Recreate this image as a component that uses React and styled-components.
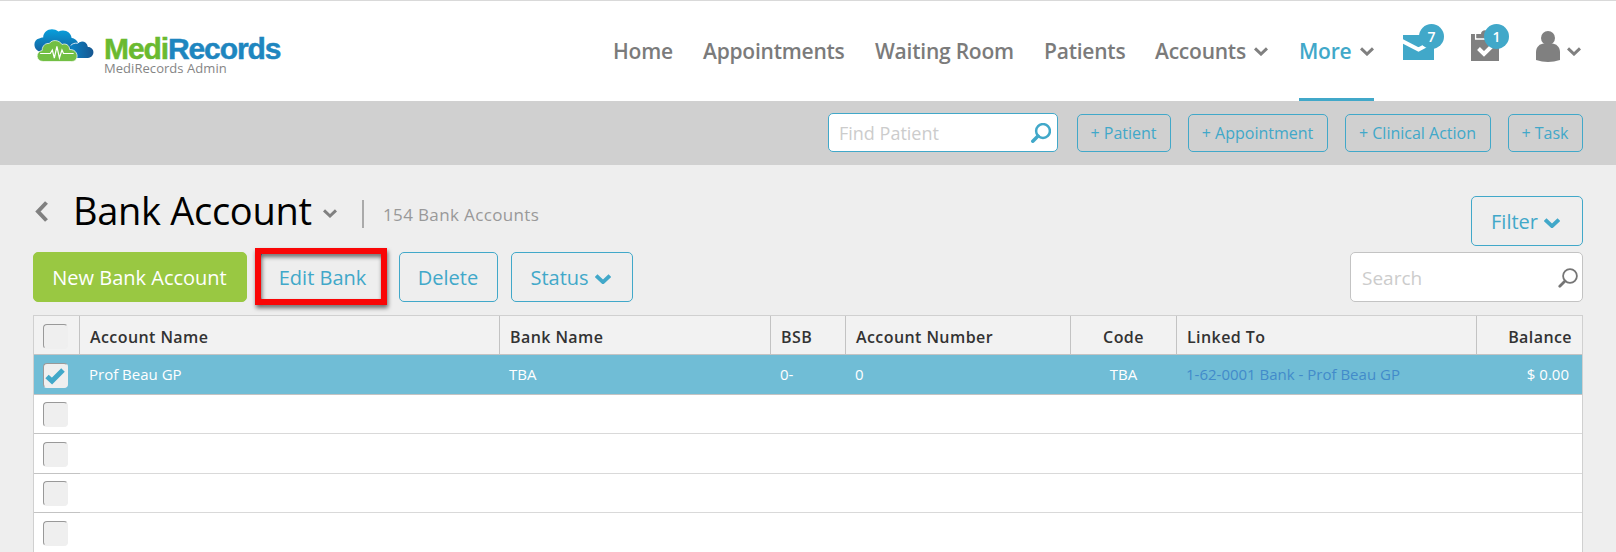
import React from "react";
import styled, { createGlobalStyle, ThemeProvider } from 'styled-components';

const theme = {
  primary: '#41a8c9',
  green: '#99c842',
  gray: '#7b7b7b',
  icon: '#808080',
  border: '#c3c3c3',
}

const GlobalStyle = createGlobalStyle`
  * {
    box-sizing: border-box;
  }
  body {
    margin: 0;
    background-color: #eee;
    font-family: "Open Sans", sans-serif;
  }
`
const Page = styled.div`
  width: 1616px;
  height: 552px;
  overflow: hidden;
  white-space: nowrap;
`
const Header = styled.header`
  height: 101px;
  background-color: #fff;
  border-top: 1px solid #d9d9d9;
  display: flex;
  padding-left: 33px;
`
const Logo = styled.div`
  display: flex;
  width: 580px;
  padding-top: 26px;
`
const LogoText = styled.div`
  margin-left: 9px;
  padding-top: 8px;
`
const Brand = styled.div`
  font-family: "Liberation Sans", sans-serif;
  font-weight: bold;
  font-size: 30px;
  line-height: 28px;
  letter-spacing: -1.1px;
  color: #1e86bf;
  -webkit-text-stroke: .5px currentColor;
  span{
    color: #6aba30;
  }
`
const BrandUser = styled.div`
  font-size: 13px;
  line-height: 14px;
  margin-top: -2px;
  color: #858585;
  letter-spacing: .05px;
`
const Nav = styled.nav`
  display: flex;
`
const NavItem = styled.a`
  display: flex;
  align-items: center;
  width: ${props => props.$width}px;
  margin-right: ${props => props.$gap || 0}px;
  height: 100px;
  padding-top: 2px;
  padding-bottom: ${props => props.$active ? 0 : 3}px;
  border-bottom: ${props => props.$active ? `3px solid ${props.theme.primary}` : 'none'};
  color: ${props => props.$active ? props.theme.primary : props.theme.gray};
  font-size: 21px;
  font-weight: 600;
  letter-spacing: -.23px;
  svg{
    margin-left: auto;
    margin-top: 2px;
  }
`
const NavIcon = styled.div`
  position: relative;
  width: ${props => props.$width}px;
  padding-top: ${props => props.$top}px;
  svg{
    display: block;
  }
`
const Badge = styled.span`
  position: absolute;
  top: 23px;
  left: ${props => props.$left}px;
  width: 25px;
  height: 25px;
  border-radius: 50%;
  background-color: ${props => props.theme.primary};
  color: #fff;
  font-size: 14px;
  font-weight: 600;
  line-height: 26px;
  text-align: center;
`
const Toolbar = styled.div`
  height: 64px;
  background-color: #d0d0d0;
  display: flex;
  justify-content: flex-end;
  align-items: flex-end;
  gap: 17px;
  padding: 0 33px 13px 0;
`
const SearchBox = styled.div`
  width: ${props => props.$width}px;
  height: ${props => props.$height}px;
  margin-right: ${props => props.$gap || 0}px;
  padding: 1px ${props => props.$right}px 0 ${props => props.$active ? 10 : 11}px;
  border: 1px solid ${props => props.$active ? props.theme.primary : props.theme.border};
  border-radius: 5px;
  background-color: #fff;
  color: #ccc;
  font-size: ${props => props.$active ? 18 : 19}px;
  display: flex;
  align-items: center;
  justify-content: space-between;
`
const Button = styled.button`
  position: relative;
  width: ${props => props.$width}px;
  height: ${props => props.$small ? 38 : 50}px;
  padding: 0 1px 0 0;
  border: 1px solid ${props => props.$green ? props.theme.green : props.theme.primary};
  border-radius: 5px;
  background-color: ${props => props.$green ? props.theme.green : 'transparent'};
  color: ${props => props.$green ? '#fff' : props.theme.primary};
  font-family: inherit;
  font-size: ${props => props.$small ? 16 : 20}px;
  display: flex;
  align-items: center;
  justify-content: center;
  gap: 6px;
  svg{
    margin: 4px 2px 0 0;
  }
`
const Highlight = styled.span`
  position: absolute;
  top: -5px;
  left: -6px;
  width: 132px;
  height: 57px;
  border: 6px solid #f90606;
  filter: drop-shadow(1px 3px 2px rgba(0, 0, 0, .55));
`
const TitleRow = styled.div`
  display: flex;
  justify-content: space-between;
  height: 87px;
  padding: 0 33px 0 35px;
`
const TitleGroup = styled.div`
  display: flex;
  align-items: center;
  height: 92px;
  > svg:last-of-type{
    margin-top: 6px;
  }
`
const Title = styled.h1`
  margin: -2px 11px 0 25px;
  width: 239px;
  font-size: 38px;
  font-weight: 400;
  letter-spacing: -.3px;
  color: #000;
`
const Count = styled.div`
  margin: 5px 0 0 25px;
  padding-left: 19px;
  border-left: 2px solid #aaa;
  height: 28px;
  line-height: 29px;
  font-size: 17px;
  letter-spacing: .36px;
  color: #999;
`
const FilterCont = styled.div`
  padding-top: 31px;
`
const Actions = styled.div`
  display: flex;
  justify-content: space-between;
  padding: 0 33px;
`
const ButtonGroup = styled.div`
  display: flex;
  gap: 13px;
`
const Table = styled.div`
  margin: 13px 33px 0;
  border: 1px solid #d0d0d0;
  border-bottom: none;
`
const Row = styled.div`
  display: grid;
  grid-template-columns: 46px 420px 271px 75px 225px 106px 300px 105px;
  height: ${props => props.$height}px;
  background-color: ${props => props.$selected ? '#70bdd6' : '#fff'};
  color: #fff;
  font-size: 15px;
`
const HeadRow = styled(Row)`
  background-color: #f2f2f2;
  color: #333;
  font-size: 16px;
  font-weight: 600;
  letter-spacing: .42px;
`
const Cell = styled.div`
  display: flex;
  align-items: center;
  justify-content: ${props => props.$align || 'flex-start'};
  padding: 0 13px 2px ${props => props.$align === 'center' ? 12 : 9}px;
  border-bottom: 1px solid ${props => props.$light ? '#d9d9d9' : props.theme.border};
`
const HeadCell = styled(Cell)`
  padding: 3px 10px 0 10px;
  border-right: 1px solid ${props => props.theme.border};
  &:last-child{
    border-right: none;
  }
`
const CheckCell = styled.div`
  padding: ${props => props.$top}px 0 0 9px;
  border-bottom: 1px solid ${props => props.theme.border};
  border-right: ${props => props.$head ? `1px solid ${props.theme.border}` : 'none'};
`
const Checkbox = styled.div`
  width: 25px;
  height: 25px;
  border-radius: 4px;
  border: 1px solid #efefef;
  border-top-color: #999;
  border-left-color: #999;
  background-color: #efefef;
  svg{
    display: block;
  }
`
const LinkText = styled.a`
  color: #428bca;
`

const Chevron = ({ color = theme.icon, width = 14, stroke = 3 }) => (
  <svg width={width} height={width * .65} viewBox="0 0 14 9" fill="none" stroke={color} strokeWidth={stroke}>
    <path d="M1 1.3 L7 7 L13 1.3" />
  </svg>
)

const SearchIcon = ({ color, size, stroke }) => (
  <svg width={size} height={size} viewBox="0 0 20 20" fill="none" stroke={color}>
    <circle cx="12" cy="8" r="6.9" strokeWidth={stroke} />
    <path d="M7 13 L1.8 18.2" strokeWidth={stroke + 1} strokeLinecap="round" />
  </svg>
)

const LogoIcon = () => (
  <svg width="62" height="36" viewBox="-1 0 61 36" preserveAspectRatio="none">
    <defs>
      <linearGradient id="cloudBlue" x1="0" y1="0" x2="0" y2="1">
        <stop offset="0" stopColor="#08a0dc" />
        <stop offset="1" stopColor="#14619f" />
      </linearGradient>
      <linearGradient id="cloudDark" x1="0" y1="0" x2="1" y2="0">
        <stop offset="0" stopColor="#0b82c4" />
        <stop offset="1" stopColor="#175690" />
      </linearGradient>
    </defs>
    <path fill="url(#cloudBlue)" d="M8 25 C-1 25 -2 13 5 11.500 C6 11 8 10.500 9 10.500 C9 3 18 -.5 24 4.500 C30 1.500 36.500 5 37 11 C44 12 46 20 41 25 Z" />
    <path fill="url(#cloudDark)" d="M36 31 V19 C38 17 40 16 43 16.500 C46 13 52 14 53 20 C60 20 60.500 30 53 31 Z" />
    <path fill="none" stroke="#fff" strokeWidth=".8" d="M36 18.500 C38 16.500 40 16 43 16.200 C44 15 45 14.300 46.500 14" />
    <path fill="#72bf44" stroke="#fff" strokeWidth=".7" d="M9 34.500 C1.500 34.500 1 24.500 8 23.500 C8 18 12 16 15 16.500 C18 12 25 13 27.500 17.500 C31 16 35 18 35 22.500 C44 22 45 34.500 37 34.500 Z" />
    <path fill="none" stroke="#fff" strokeWidth="1.200" d="M6 26.500 H16 L18 23 L20 31 L22.500 19.500 L25 31 L27.500 23 L29 26.500 H39" />
  </svg>
)

const columns = [
  { name: 'Account Name', value: 'Prof Beau GP' },
  { name: 'Bank Name', value: 'TBA' },
  { name: 'BSB', value: '0-' },
  { name: 'Account Number', value: '0' },
  { name: 'Code', value: 'TBA', align: 'center' },
  { name: 'Linked To', value: '1-62-0001 Bank - Prof Beau GP', link: true },
  { name: 'Balance', value: '$ 0.00', align: 'flex-end' },
]

const emptyRows = [
  { height: 39, top: 7 },
  { height: 40, top: 8 },
  { height: 39, top: 7 },
  { height: 40, top: 8 },
]

const App = () => {

  return(
    <ThemeProvider theme={theme}>
      <GlobalStyle />
      <Page>
        <Header>
          <Logo>
            <LogoIcon />
            <LogoText>
              <Brand><span>Medi</span>Records</Brand>
              <BrandUser>MediRecords Admin</BrandUser>
            </LogoText>
          </Logo>
          <Nav>
            <NavItem $width={90}>Home</NavItem>
            <NavItem $width={172}>Appointments</NavItem>
            <NavItem $width={169}>Waiting Room</NavItem>
            <NavItem $width={111}>Patients</NavItem>
            <NavItem $width={113} $gap={31}>
              Accounts
              <Chevron />
            </NavItem>
            <NavItem $width={75} $gap={29} $active>
              More
              <Chevron />
            </NavItem>
            <NavIcon $width={68} $top={34}>
              <svg width="31" height="25" viewBox="0 0 31 25">
                <path fill={theme.primary} d="M0 0 H31 V25 H0 Z" />
                <path fill="none" stroke="#fff" strokeWidth="4" d="M-1 6 L15.500 14.500 L24 10" />
              </svg>
              <Badge $left={16}>7</Badge>
            </NavIcon>
            <NavIcon $width={65} $top={29}>
              <svg width="28" height="31" viewBox="0 0 28 31">
                <path fill={theme.icon} d="M0 4 H28 V31 H0 Z" />
                <path fill="none" stroke="#fff" strokeWidth="1.500" d="M4.700 3 V9 H23 V3" />
                <path fill={theme.icon} d="M5.500 4 H10 C10 -1 18 -1 18 4 H22 V8 H5.500 Z" />
                <path fill="none" stroke="#fff" strokeWidth="4" d="M7.500 18.500 L13 24 L21 16" />
              </svg>
              <Badge $left={13}>1</Badge>
            </NavIcon>
            <NavIcon $width={31} $top={30}>
              <svg width="24" height="31" viewBox="0 0 24 31" fill={theme.icon}>
                <circle cx="12" cy="7" r="7" />
                <path d="M0 29 V21 C0 16 4 12.500 8 12.500 H16 C20 12.500 24 16 24 21 V29 Q12 33 0 29 Z" />
              </svg>
            </NavIcon>
            <NavItem $width={14}>
              <Chevron />
            </NavItem>
          </Nav>
        </Header>
        <Toolbar>
          <SearchBox $width={230} $height={39} $right={6} $gap={2} $active>
            Find Patient
            <SearchIcon color={theme.primary} size={20} stroke={2.5} />
          </SearchBox>
          <Button $small $width={94}>+ Patient</Button>
          <Button $small $width={140}>+ Appointment</Button>
          <Button $small $width={146}>+ Clinical Action</Button>
          <Button $small $width={75}>+ Task</Button>
        </Toolbar>
        <TitleRow>
          <TitleGroup>
            <svg width="13" height="21" viewBox="0 0 13 21" fill="none" stroke={theme.icon} strokeWidth="4">
              <path d="M11.500 1.500 L3 10.500 L11.500 19.500" />
            </svg>
            <Title>Bank Account</Title>
            <Chevron />
            <Count>154 Bank Accounts</Count>
          </TitleGroup>
          <FilterCont>
            <Button $width={112}>
              Filter
              <Chevron color={theme.primary} width={16} stroke={3.4} />
            </Button>
          </FilterCont>
        </TitleRow>
        <Actions>
          <ButtonGroup>
            <Button $width={214} $green>New Bank Account</Button>
            <Button $width={126}>
              Edit Bank
              <Highlight />
            </Button>
            <Button $width={99}>Delete</Button>
            <Button $width={122}>
              Status
              <Chevron color={theme.primary} width={16} stroke={3.4} />
            </Button>
          </ButtonGroup>
          <SearchBox $width={233} $height={50} $right={4}>
            Search
            <SearchIcon color="#757575" size={20} stroke={1.8} />
          </SearchBox>
        </Actions>
        <Table>
          <HeadRow $height={39}>
            <CheckCell $top={8} $head>
              <Checkbox />
            </CheckCell>
            {columns.map(col => (
              <HeadCell key={col.name} $align={col.align}>{col.name}</HeadCell>
            ))}
          </HeadRow>
          <Row $height={40} $selected>
            <CheckCell $top={8}>
              <Checkbox>
                <svg width="23" height="23" viewBox="0 0 23 23" fill="none" stroke={theme.primary} strokeWidth="5">
                  <path d="M3 12.500 L8 17 L19 6" />
                </svg>
              </Checkbox>
            </CheckCell>
            {columns.map(col => (
              <Cell key={col.name} $align={col.align}>
                {col.link ? <LinkText>{col.value}</LinkText> : col.value}
              </Cell>
            ))}
          </Row>
          {emptyRows.map((row, i) => (
            <Row key={i} $height={row.height}>
              <CheckCell $top={row.top}>
                <Checkbox />
              </CheckCell>
              {columns.map(col => (
                <Cell key={col.name} $light />
              ))}
            </Row>
          ))}
        </Table>
      </Page>
    </ThemeProvider>
  )
}

export default App;
